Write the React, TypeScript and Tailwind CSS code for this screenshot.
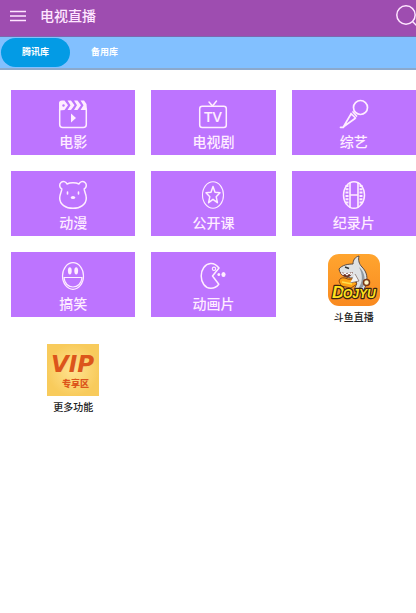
import type { ReactNode } from "react";

interface Category {
  name: string;
  icon: ReactNode;
}

function Icon({ children }: { children: ReactNode }) {
  return (
    <svg
      viewBox="0 0 28 28"
      className="h-7 w-7 overflow-visible"
      fill="none"
      stroke="currentColor"
      strokeWidth="1.5"
      strokeLinecap="round"
      strokeLinejoin="round"
      aria-hidden="true"
    >
      {children}
    </svg>
  );
}

const categories: Category[] = [
  {
    name: "电影",
    icon: (
      <Icon>
        <path d="M.7 9v15.500a3 3 0 0 0 3 3h20.600a3 3 0 0 0 3-3V9" />
        <path
          d="M0 10.500V3Q0 .5 3 .5h2.500L9 5.200 5.500 10zM8.500.5h3.500L15.500 5.200 12 10H8.500L11.500 5.200zM15 .5h3.500L22 5.200 18.500 10H15L18 5.200zM21.500.5H25L27.500 4 28 10h-6.500L24.500 5.200z"
          fill="currentColor"
          stroke="none"
        />
        <circle cx="4.500" cy="5.500" r="1.200" fill="#bd74ff" stroke="none" />
        <path d="M12 13.500v9l5-4.500z" fill="currentColor" stroke="none" />
      </Icon>
    ),
  },
  {
    name: "电视剧",
    icon: (
      <Icon>
        <rect x=".7" y="6.200" width="26.600" height="21.200" rx="2.500" />
        <path d="m10 2 3.500 4L17.500 1" />
        <text
          x="14"
          y="22"
          textAnchor="middle"
          fill="currentColor"
          stroke="none"
          className="font-['Open_Sans'] text-[15px] font-semibold"
        >
          TV
        </text>
      </Icon>
    ),
  },
  {
    name: "综艺",
    icon: (
      <Icon>
        <circle cx="20.500" cy="7.500" r="7" strokeWidth="1.700" />
        <path d="M13 12 16.500 16M11 13.500l4.500 4.500M11 14 3.500 26.800 15 18.500M.500 27.300h3" strokeWidth="1.700" />
      </Icon>
    ),
  },
  {
    name: "动漫",
    icon: (
      <Icon>
        <path d="M8 3c2-1 4-1.200 6-1.200s4 .2 6 1.200C21 .5 24-.3 26 1.500s1.700 5-.8 6.500c0 2.500 2.100 5 2.100 9 0 6.500-6 10.300-13.300 10.300S.7 23.500.7 17c0-4 2.100-6.500 2.100-9C.3 6.500 0 3.300 2 1.500S7 .5 8 3Z" />
        <path d="M8.500 11v2M19.500 11v2" strokeWidth="1.600" />
        <ellipse cx="14" cy="16.500" rx="2.200" ry="1.500" fill="currentColor" stroke="none" />
      </Icon>
    ),
  },
  {
    name: "公开课",
    icon: (
      <Icon>
        <ellipse cx="14" cy="14" rx="10.500" ry="13.300" strokeWidth="1.100" />
        <path d="m14 5.500 2 5.800 5 .4-3.800 4 1.200 6L14 18.300l-4.400 3.400 1.200-6-3.800-4 5-.4z" />
      </Icon>
    ),
  },
  {
    name: "纪录片",
    icon: (
      <Icon>
        <ellipse cx="14" cy="14" rx="10.500" ry="13.300" />
        <path d="M10 2v24M18 2v24M10 14h8" strokeWidth="1.600" />
        <path d="M7 4v20M21 4v20" strokeWidth="3" strokeDasharray="2 1.300" strokeLinecap="butt" />
      </Icon>
    ),
  },
  {
    name: "搞笑",
    icon: (
      <Icon>
        <ellipse cx="14" cy="14" rx="10.500" ry="13.300" strokeWidth="1.200" />
        <ellipse cx="10.800" cy="8.800" rx="1.900" ry="3.600" fill="currentColor" stroke="none" />
        <ellipse cx="17.200" cy="8.800" rx="1.900" ry="3.600" fill="currentColor" stroke="none" />
        <path d="M5 15.500h18c-.5 6-4.300 9.500-9 9.500s-8.500-3.500-9-9.500Z" strokeWidth="1.200" />
      </Icon>
    ),
  },
  {
    name: "动画片",
    icon: (
      <Icon>
        <path d="M20 6C17.500 2.800 14.500 1.200 11.500 1.500 6 2 2.200 7.500 2.200 14S6 26 11.500 26.300c3.300.2 6.300-1.500 8.300-4L13.500 14z" />
        <circle cx="15" cy="6.800" r="1.700" strokeWidth="1.100" />
        <ellipse cx="19.800" cy="12.500" rx="1.400" ry="1.600" fill="currentColor" stroke="none" />
        <ellipse cx="24.500" cy="12.500" rx="2.100" ry="2.500" fill="currentColor" stroke="none" />
      </Icon>
    ),
  },
];

function DouyuLogo() {
  return (
    <svg viewBox="0 0 52 52" className="h-[52px] w-[52px]" aria-hidden="true">
      <defs>
        <linearGradient id="douyu" x1="0" y1="0" x2="0" y2="1">
          <stop offset="0" stopColor="#ffa52f" />
          <stop offset="1" stopColor="#f98a20" />
        </linearGradient>
      </defs>
      <rect width="52" height="52" rx="11" fill="url(#douyu)" />
      <path
        d="M11 15C14 11 20 10 25 10c0-4 2-7 6-8-1 4 0 8 3 11 5 5 6 11 4 18l-3 7-9-3c4-5 3-10-1-11-6 0-13-2-14-9Z"
        fill="#dfe2e4"
        stroke="#5b4b43"
        strokeWidth="1"
      />
      <path d="M31 13c6 5 7 13 4 20l-5 2c5-7 5-14 1-22Z" fill="#929aa1" />
      <path d="M12 18q6 2 13 0-2 6-7 5-5-1-6-5Z" fill="#6b3327" />
      <path d="m13 18.500 2 2 2-1.500 2 2 2-2 2 1.500 1-2" fill="none" stroke="#fff" strokeWidth="1.200" />
      <path d="m17 13 4 1.500" stroke="#333" strokeWidth="1.500" />
      <path d="M11 27q1-4 6-3 3 2 8 1l4 5-6 4-10-2Z" fill="#ffa414" stroke="#8c4b13" />
      <path d="m27 20 4 7-9 2" fill="#f2f3f4" stroke="#786156" strokeWidth=".7" />
      <path d="m14 28 10 2" stroke="#ffe04c" strokeWidth="1.500" />
      <circle cx="38.500" cy="28.500" r="3" fill="#fff8c8" stroke="#7b3815" strokeWidth="1.500" />
      <g
        className="font-['Liberation_Sans'] font-bold italic"
        fill="#ffe21c"
        stroke="#3d2411"
        strokeWidth="2.500"
        paintOrder="stroke"
        strokeLinejoin="round"
      >
        <text x="4" y="44" className="text-[17px]">D</text>
        <text x="15" y="44" className="text-[12px]">OJYU</text>
      </g>
    </svg>
  );
}

function VipLogo() {
  return (
    <svg viewBox="0 0 52 52" className="h-[52px] w-[52px]" aria-hidden="true">
      <defs>
        <radialGradient id="vip">
          <stop offset="0" stopColor="#ffe391" />
          <stop offset="1" stopColor="#f8cb5c" />
        </radialGradient>
      </defs>
      <rect width="52" height="52" fill="url(#vip)" />
      <text x="4" y="28" fill="#dc551b" className="font-['DejaVu_Sans'] text-[23px] font-bold italic">
        VIP
      </text>
      <text x="15" y="43" fill="#dc551b" className="font-['Noto_Sans_CJK_SC'] text-[9px] font-black">
        专享区
      </text>
    </svg>
  );
}

const apps: Category[] = [
  { name: "斗鱼直播", icon: <DouyuLogo /> },
  { name: "更多功能", icon: <VipLogo /> },
];

export default function App() {
  return (
    <div className="min-h-screen overflow-hidden bg-white font-['Liberation_Sans','Noto_Sans_CJK_SC',sans-serif]">
      <header className="flex h-[37px] items-center overflow-hidden border-b border-[#7b68ae] bg-[#9e4db0] pb-1 text-[#ffe6ff]">
        <button type="button" aria-label="菜单" className="ml-2.5 flex h-8 w-4 items-center">
          <svg viewBox="0 0 16 12" className="h-3 w-4" stroke="currentColor" strokeWidth="1.700" aria-hidden="true">
            <path d="M0 1.500h16M0 6h16M0 10.500h16" />
          </svg>
        </button>
        <h1 className="ml-3.5 text-[14px] leading-5 font-medium">电视直播</h1>
        <button type="button" aria-label="搜索" className="-mr-1 ml-auto h-6 w-6 shrink-0">
          <svg viewBox="0 0 24 24" className="h-6 w-6" fill="none" stroke="currentColor" strokeWidth="1.500" aria-hidden="true">
            <circle cx="10" cy="11" r="9.200" />
            <path d="m16.500 17.500 6 6" />
          </svg>
        </button>
      </header>

      <nav className="flex h-[33px] items-center border-b-2 border-[#8ba9cd] bg-[#82c0ff] px-px text-[9px] font-bold text-white">
        <button type="button" aria-current="page" className="h-[29px] w-[69px] rounded-full bg-[#039be5]">
          腾讯库
        </button>
        <button type="button" className="h-[29px] w-[69px] rounded-full">
          备用库
        </button>
      </nav>

      <main className="grid grid-cols-3 items-start gap-4 pt-5 pl-[11px]">
        {categories.map((c) => (
          <button
            key={c.name}
            type="button"
            className="flex h-[65px] flex-col items-center bg-[#bd74ff] pt-2.5 text-[#ffedff]"
          >
            {c.icon}
            <span className="mt-1 text-[14px] leading-5 font-medium">{c.name}</span>
          </button>
        ))}
        {apps.map((a) => (
          <button key={a.name} type="button" className="flex flex-col items-center pt-0.5 text-[#222]">
            {a.icon}
            <span className="mt-1 text-[10px] leading-4 font-medium">{a.name}</span>
          </button>
        ))}
      </main>
    </div>
  );
}
